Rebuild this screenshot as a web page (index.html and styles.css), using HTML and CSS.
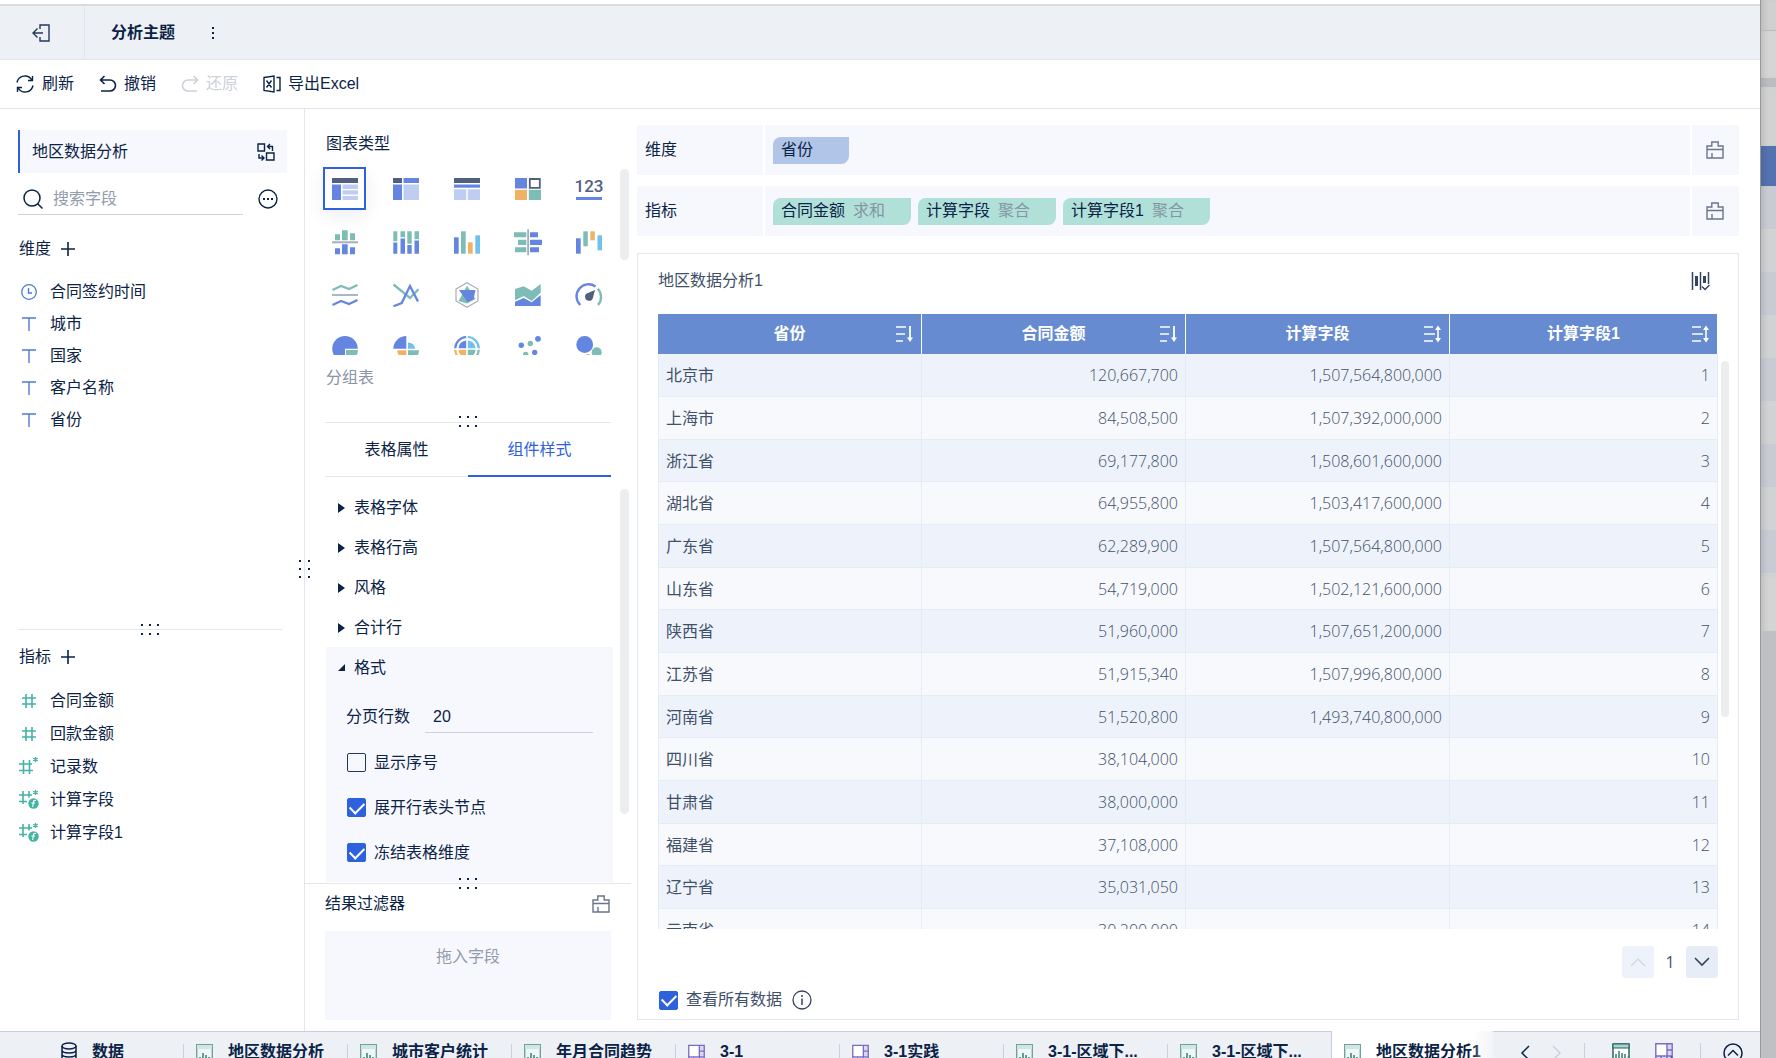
FILE: index.html
```html
<!DOCTYPE html>
<html lang="zh-CN">
<head>
    <meta charset="utf-8">
    <title>分析主题</title>
    <link rel="stylesheet" href="styles.css">
</head>
<body>
    <!-- shared icons -->
    <svg class="sprite" aria-hidden="true">
        <symbol id="i-text" viewBox="0 0 16 16"><path d="M1 2h14M8 2v13" fill="none" stroke="#4f7bd0" stroke-width="1.4"/></symbol>
        <symbol id="i-num" viewBox="0 0 20 20"><path d="M3 7h14M3 13h14M7 3v14M13 3v14" fill="none" stroke="#43b3a6" stroke-width="1.6"/></symbol>
        <symbol id="i-numstar" viewBox="0 0 20 20"><path d="M0 7h13M0 13.500h14M4.500 3v14M10.500 3v14" fill="none" stroke="#43b3a6" stroke-width="1.6"/><path d="M16.500 0v5M14.200 1.200l4.600 2.600M18.800 1.200l-4.600 2.600" stroke="#43b3a6" stroke-width="1.3"/></symbol>
        <symbol id="i-calc" viewBox="0 0 20 20"><path d="M0 5h13M0 11.500h8M4 1v13M10 1v6.500" fill="none" stroke="#43b3a6" stroke-width="1.6"/><path d="M16.500 0v5M14.200 1.200l4.600 2.600M18.800 1.200l-4.600 2.600" stroke="#43b3a6" stroke-width="1.3"/><circle cx="14.500" cy="13.500" r="5.200" fill="#43b3a6"/><path d="M17 10.500c-2-.6-2.500.6-2.700 2l-.6 4.500M12.400 13h3.800" fill="none" stroke="#fff" stroke-width="1.100"/></symbol>
        <symbol id="i-plus" viewBox="0 0 14 14"><path d="M7 0v14M0 7h14" stroke="#0b2346" stroke-width="1.600"/></symbol>
        <symbol id="i-clear" viewBox="0 0 18 18"><path d="M1 17V5h4.800V1h6.400v4H17v12zM1 8.500h16M6 17v-5" fill="none" stroke="#68758d" stroke-width="1.400"/></symbol>
        <symbol id="i-grip" viewBox="0 0 18 11"><path d="M0 0h2v2H0zM8 0h2v2H8zM16 0h2v2h-2zM0 9h2v2H0zM8 9h2v2H8zM16 9h2v2h-2z" fill="#0b2346"/></symbol>
        <symbol id="i-desc" viewBox="0 0 18 18"><path d="M1 2h10M1 9h9M1 16h7" stroke="#fff" stroke-width="1.600"/><path d="M15 1v13" stroke="#fff" stroke-width="1.800"/><path d="M12 12.500h6L15 17z" fill="#fff"/></symbol>
        <symbol id="i-both" viewBox="0 0 18 18"><path d="M1 2h9M1 9h11M1 16h9" stroke="#fff" stroke-width="1.600"/><path d="M15 3v12" stroke="#fff" stroke-width="1.600"/><path d="M12 5h6l-3-4.500zM12 13h6l-3 4.500z" fill="#fff"/></symbol>
        <symbol id="i-comp" viewBox="0 0 17 20"><path d="M.7.700h15.600v18.600H.7z" fill="#eef7f5" stroke="#6fa39c" stroke-width="1.400"/><path d="M1 1h15v4H1z" fill="#cfe6e2"/><path d="M4 19v-6M7 19V9M10 19v-8M13 19v-6" stroke="#3f857c" stroke-width="1.600"/></symbol>
        <symbol id="i-dash" viewBox="0 0 18 20"><path d="M1 1h16v18H1z" fill="#ddd6f4"/><path d="M1 1h11v12H1z" fill="#fff"/><path d="M.8.800h16.400v18.400H.8zM12 1v18M1 13h16M12 7h5M6 13v6" fill="none" stroke="#7a6cc4" stroke-width="1.400"/></symbol>
    </svg>

    <div class="page">
        <div class="app">
            <header class="topbar">
                <button class="back" aria-label="退出">
                    <svg width="18" height="18" viewBox="0 0 18 18"><path d="M8 5V1h9v16H8v-4M1 9h10M5.500 4.500L1 9l4.500 4.500" fill="none" stroke="#24395a" stroke-width="1.400"/></svg>
                </button>
                <h1>分析主题</h1>
                <button class="dots" aria-label="更多"><svg width="4" height="14" viewBox="0 0 4 14"><path d="M1 1h2v2H1zM1 6h2v2H1zM1 11h2v2H1z" fill="#0b2346"/></svg></button>
            </header>

            <nav class="toolbar">
                <button><svg width="20" height="18" viewBox="0 0 20 18"><path d="M2 7.500A8 8 0 0 1 16.800 5M18 10.500A8 8 0 0 1 3.200 13M17.500 1v4.500H13M2.500 17v-4.500H7" fill="none" stroke="#0b2346" stroke-width="1.400"/></svg>刷新</button>
                <button><svg width="18" height="18" viewBox="0 0 18 18"><path d="M5.500 1L1.500 5l4 4M1.500 5H11a5.500 5.500 0 0 1 0 11H2" fill="none" stroke="#0b2346" stroke-width="1.600"/></svg>撤销</button>
                <button disabled><svg width="18" height="18" viewBox="0 0 18 18"><path d="M12.500 1l4 4-4 4M16.500 5H7a5.500 5.500 0 0 0 0 11h9" fill="none" stroke="#cdd1da" stroke-width="1.600"/></svg>还原</button>
                <button><svg width="18" height="18" viewBox="0 0 18 18"><path d="M1 2.500L11 1v16L1 15.500zM13.500 2.500H17v13h-3.500M3.500 5.500l5 7M8.500 5.500l-5 7" fill="none" stroke="#0b2346" stroke-width="1.400"/></svg>导出Excel</button>
            </nav>

            <main class="main">
                <aside class="fields">
                    <section class="dims">
                        <div class="dataset">地区数据分析
                            <button aria-label="切换数据集"><svg width="18" height="18" viewBox="0 0 18 18"><path d="M1 1h6.500v7H1zM9.500 10H17v7H9.500zM11 3.500h4.500V8M13 1l-2.500 2.500L13 6M2 11v4h4.500M4.500 12.500L7 15l-2.500 2.500" fill="none" stroke="#0b2346" stroke-width="1.400"/></svg></button>
                        </div>
                        <div class="search">
                            <label><svg width="20" height="20" viewBox="0 0 20 20"><circle cx="9" cy="9" r="8" fill="none" stroke="#0b2346" stroke-width="1.500"/><path d="M14.500 14.500l5 5" stroke="#0b2346" stroke-width="1.500"/></svg>
                            <input type="text" placeholder="搜索字段" aria-label="搜索字段"></label>
                            <button aria-label="更多"><svg width="20" height="20" viewBox="0 0 20 20"><circle cx="10" cy="10" r="9" fill="none" stroke="#0b2346" stroke-width="1.400"/><path d="M5 9h2v2H5zM9 9h2v2H9zM13 9h2v2h-2z" fill="#0b2346"/></svg></button>
                        </div>
                        <h2>维度 <button aria-label="添加维度"><svg width="14" height="14"><use href="#i-plus"/></svg></button></h2>
                        <ul>
                            <li><svg width="16" height="16" viewBox="0 0 16 16"><path d="M7.500 4v5H11" fill="none" stroke="#4f7bd0" stroke-width="1.400"/><circle cx="8" cy="8" r="7.300" fill="none" stroke="#4f7bd0" stroke-width="1.300"/></svg>合同签约时间</li>
                            <li><svg width="16" height="16"><use href="#i-text"/></svg>城市</li>
                            <li><svg width="16" height="16"><use href="#i-text"/></svg>国家</li>
                            <li><svg width="16" height="16"><use href="#i-text"/></svg>客户名称</li>
                            <li><svg width="16" height="16"><use href="#i-text"/></svg>省份</li>
                        </ul>
                    </section>
                    <section class="measures">
                        <svg class="grip" width="18" height="11"><use href="#i-grip"/></svg>
                        <h2>指标 <button aria-label="添加指标"><svg width="14" height="14"><use href="#i-plus"/></svg></button></h2>
                        <ul>
                            <li><svg width="20" height="20"><use href="#i-num"/></svg>合同金额</li>
                            <li><svg width="20" height="20"><use href="#i-num"/></svg>回款金额</li>
                            <li><svg width="20" height="20"><use href="#i-numstar"/></svg>记录数</li>
                            <li><svg width="20" height="20"><use href="#i-calc"/></svg>计算字段</li>
                            <li><svg width="20" height="20"><use href="#i-calc"/></svg>计算字段1</li>
                        </ul>
                    </section>
                    <svg class="grip-side" width="11" height="18" viewBox="0 0 11 18"><path d="M0 0h2v2H0zM9 0h2v2H9zM0 8h2v2H0zM9 8h2v2H9zM0 16h2v2H0zM9 16h2v2H9z" fill="#0b2346"/></svg>
                </aside>

                <div class="config">
                    <section class="types">
                        <h2>图表类型</h2>
                        <div class="scroll">
                            <div class="chart-grid">
                                <button class="selected" aria-label="分组表"><svg viewBox="0 0 28 28"><path class="k" d="M1 3h26v5H1z"/><path class="b" d="M1 9.500h9V25H1z"/><path class="l" d="M11.500 9.500H27V14H11.500zM11.500 15.300H27V19.500H11.500zM11.500 21H27v4H11.500z"/></svg></button>
                                <button aria-label="交叉表"><svg viewBox="0 0 28 28"><path class="k" d="M1 3h9v5H1z"/><path class="b" d="M11.500 3H27v5H11.500zM1 9.500h9V25H1z"/><path class="l" d="M11.500 9.500H27V25H11.500z"/></svg></button>
                                <button aria-label="明细表"><svg viewBox="0 0 28 28"><path class="k" d="M1 3h26v5H1z"/><path class="b" d="M1 9.500h26v3.200H1z"/><path class="l" d="M1 14.200h12.200V25H1zM14.800 14.200H27V25H14.800z"/></svg></button>
                                <button aria-label="颜色表格"><svg viewBox="0 0 28 28"><path class="b" d="M1 3h12v10.500H1z"/><path d="M15.800 4h10v8.800h-10z" fill="#fff" stroke="#51607f" stroke-width="1.800"/><path class="o" d="M1 14.800h12V25H1z"/><path class="g" d="M14.800 14.800H27V25H14.800z"/></svg></button>
                                <button aria-label="指标卡"><svg viewBox="0 0 28 28"><text x="14" y="17" text-anchor="middle">123</text><path class="b" d="M1 22h26v3H1z"/></svg></button>

                                <button aria-label="对比柱状图"><svg viewBox="0 0 28 28"><path class="g" d="M4 6.300h5v6H4zM11 2.300h5.700v10H11zM19 5.300h5v7h-5z"/><path class="s" d="M1 13.300h26v2H1z"/><path class="b" d="M4 20.300h5v6H4zM11 16.300h5.700v10H11zM19 19.300h5v7h-5z"/></svg></button>
                                <button aria-label="堆积柱状图"><svg viewBox="0 0 28 28"><path class="g" d="M1.300 3.300h4v10h-4zM8.500 3.300H13v6H8.500zM15.300 3.300h4.400v12.400h-4.400zM22.500 3.300H27v8h-4.500z"/><path class="b" d="M1.300 14.500h4v11.200h-4zM8.500 10.500H13v15.200H8.500zM15.300 17h4.400v8.700h-4.400zM22.500 12.500H27v13.200h-4.500z"/></svg></button>
                                <button aria-label="柱状图"><svg viewBox="0 0 28 28"><path class="b" d="M1 9.300h4.700v16.400H1z"/><path class="g" d="M8 3.300h4.700v22.400H8z"/><path class="o" d="M15 14.300h4.700v11.400H15z"/><path class="c" d="M22.300 7.300H27v18.400h-4.700z"/></svg></button>
                                <button aria-label="对比条形图"><svg viewBox="0 0 28 28"><path class="g" d="M0 4.300h12.300v5H0zM4 11.700h8.300V17H4zM1 19.300h11.300v5H1z"/><path class="s" d="M13.200 1.300H15v26h-1.800z"/><path class="b" d="M16 4.300h8v5h-8zM16 11.700h12V17H16zM16 19.300h9v5h-9z"/></svg></button>
                                <button aria-label="瀑布图"><svg viewBox="0 0 28 28"><path class="b" d="M1 10.300h4.700v15.400H1z"/><path class="g" d="M8.300 3.300h4.500v15H8.300z"/><path class="o" d="M15.300 3.300h4.500v9h-4.500z"/><path class="c" d="M22.500 7.300H27v15h-4.500z"/></svg></button>

                                <button aria-label="范围面积图"><svg viewBox="0 0 28 28"><g fill="none" stroke-width="2.200"><path stroke="#7dbdb6" d="M1.500 9l8.500-4 8 3 8.500-4"/><path stroke="#a5adbe" stroke-width="1.800" d="M1 14h26"/><path stroke="#6486e0" d="M1.500 24l8.500-4 8 3 8.500-4"/></g></svg></button>
                                <button aria-label="折线图"><svg viewBox="0 0 28 28"><g fill="none" stroke-width="2.300"><path stroke="#7dbdb6" d="M1.500 3.500L18 17l8.500-8.700"/><path stroke="#6486e0" d="M1.500 25.300l8.200-3.300L18 5l8 15.500"/></g></svg></button>
                                <button aria-label="雷达图"><svg viewBox="0 0 28 28"><path d="M14 1.700L25 8v12l-11 6.300L3 20V8z" fill="none" stroke="#a5adbe" stroke-width="1.200"/><path class="g" d="M14 4.700L22.500 18 14 22.500 5.500 20z"/><path class="b" d="M6 9h16.500l-2 9.500-6 2.500z"/></svg></button>
                                <button aria-label="面积图"><svg viewBox="0 0 28 28"><path class="g" d="M1 8l8.700-2.700 8 4.400L26.700 3v8.700L17.700 20l-8-5L1 19.300z"/><path class="b" d="M1 20.700L9.700 17l8 4.300 9-7.300v11H1z"/></svg></button>
                                <button aria-label="仪表盘"><svg viewBox="0 0 28 28"><g fill="none" stroke-width="2.400"><path stroke="#6486e0" d="M5.300 24A12 12 0 0 1 20.500 5.500"/><path stroke="#7dbdb6" d="M22.800 7.800A12 12 0 0 1 23 24"/></g><path class="k" d="M20 9l-2 7.500a4 4 0 1 1-5-4.500z"/></svg></button>

                                <button aria-label="饼图"><svg viewBox="0 0 28 28"><path class="b" d="M14 27.500A12.800 12.800 0 1 1 26.800 14.700H14z"/><path class="g" d="M15 16h12a12 12 0 0 1-12 11.500z"/></svg></button>
                                <button aria-label="玫瑰图"><svg viewBox="0 0 28 28"><path class="b" d="M14.300 14.700V2a13 13 0 0 0-13 12.700z"/><path class="c" d="M16 14.700V8.500a7 7 0 0 1 7.300 6.200z"/><path class="o" d="M14.300 16.300v9a9 9 0 0 1-9-9z"/><path class="g" d="M16 16.300h11a11 11 0 0 1-11 11z"/></svg></button>
                                <button aria-label="多层饼图"><svg viewBox="0 0 28 28"><g fill="none" stroke-width="2.200"><path stroke="#6486e0" d="M2.300 14.300A11.500 11.500 0 0 1 13.200 3"/><path stroke="#70c2ed" d="M14.800 3a11.500 11.500 0 0 1 11 11.300"/><path stroke="#f0b364" d="M2.300 15.800A11.500 11.500 0 0 0 13.200 27"/><path stroke="#7dbdb6" d="M25.700 15.800A11.500 11.500 0 0 1 14.800 27"/></g><path class="b" d="M13.200 14.300V6.500a8 8 0 0 0-7.700 7.800z"/><path class="c" d="M14.800 14.300V6.500a8 8 0 0 1 7.700 7.800z"/><path class="o" d="M13.200 15.800v7.700a8 8 0 0 1-7.700-7.700z"/><path class="g" d="M14.800 15.800v7.700a8 8 0 0 0 7.700-7.700z"/></svg></button>
                                <button aria-label="散点图"><svg viewBox="0 0 28 28"><circle class="b" cx="7.300" cy="11.300" r="2.700"/><circle class="g" cx="16.300" cy="9.500" r="2.700"/><circle class="b" cx="24" cy="4.800" r="2.900"/><circle class="g" cx="11.700" cy="20.500" r="2.700"/><circle class="b" cx="20.700" cy="18.500" r="2.700"/></svg></button>
                                <button aria-label="气泡图"><svg viewBox="0 0 28 28"><circle class="b" cx="9.700" cy="10.500" r="8.400"/><circle class="g" cx="21.700" cy="18.300" r="5"/><circle class="o" cx="13" cy="23" r="3"/></svg></button>
                            </div>
                            <span class="bar bar-types"></span>
                        </div>
                        <p>分组表</p>
                    </section>

                    <section class="style">
                        <svg class="grip" width="18" height="11"><use href="#i-grip"/></svg>
                        <div class="tabs" role="tablist">
                            <button role="tab">表格属性</button>
                            <button role="tab" class="active">组件样式</button>
                        </div>
                        <div class="panels">
                            <button class="fold">表格字体</button>
                            <button class="fold">表格行高</button>
                            <button class="fold">风格</button>
                            <button class="fold">合计行</button>
                            <div class="open">
                                <button class="fold">格式</button>
                                <div class="page-rows"><label for="rows">分页行数</label><input type="text" id="rows" value="20"></div>
                                <label class="check"><input type="checkbox">显示序号</label>
                                <label class="check"><input type="checkbox" checked>展开行表头节点</label>
                                <label class="check"><input type="checkbox" checked>冻结表格维度</label>
                            </div>
                            <span class="bar bar-panels"></span>
                        </div>
                    </section>

                    <section class="filter">
                        <svg class="grip" width="18" height="11"><use href="#i-grip"/></svg>
                        <div class="filter-head"><h2>结果过滤器</h2><button aria-label="清空"><svg width="18" height="18"><use href="#i-clear"/></svg></button></div>
                        <div class="drop">拖入字段</div>
                    </section>
                </div>

                <div class="work">
                    <div class="shelf">
                        <span class="name">维度</span>
                        <div class="pills"><button class="pill dim">省份</button></div>
                        <button class="clear" aria-label="清空维度"><svg width="18" height="18"><use href="#i-clear"/></svg></button>
                    </div>
                    <div class="shelf">
                        <span class="name">指标</span>
                        <div class="pills">
                            <button class="pill">合同金额<small>求和</small></button>
                            <button class="pill">计算字段<small>聚合</small></button>
                            <button class="pill">计算字段1<small>聚合</small></button>
                        </div>
                        <button class="clear" aria-label="清空指标"><svg width="18" height="18"><use href="#i-clear"/></svg></button>
                    </div>

                    <section class="card">
                        <div class="card-head">
                            <h2>地区数据分析1</h2>
                            <button aria-label="筛选列"><svg width="19" height="19" viewBox="0 0 19 19"><path d="M1.500 0v18M9.500 0v18M17.500 0v12" stroke="#34445f" stroke-width="1.500"/><path d="M5.500 4v10M13.500 4v7" stroke="#34445f" stroke-width="3"/><path d="M11 14.500l3 3 4.500-4.500" fill="none" stroke="#34445f" stroke-width="1.500"/></svg></button>
                        </div>
                        <div class="table-area">
                            <div class="table-clip">
                                <table>
                                    <colgroup><col class="col-num"><col class="col-num"><col class="col-num"><col></colgroup>
                                    <thead>
                                        <tr>
                                            <th><div><span>省份</span><button aria-label="排序"><svg width="18" height="18"><use href="#i-desc"/></svg></button></div></th>
                                            <th><div><span>合同金额</span><button aria-label="排序"><svg width="18" height="18"><use href="#i-desc"/></svg></button></div></th>
                                            <th><div><span>计算字段</span><button aria-label="排序"><svg width="18" height="18"><use href="#i-both"/></svg></button></div></th>
                                            <th><div><span>计算字段1</span><button aria-label="排序"><svg width="18" height="18"><use href="#i-both"/></svg></button></div></th>
                                        </tr>
                                    </thead>
                                    <tbody>
                                        <tr><td>北京市</td><td>120,667,700</td><td>1,507,564,800,000</td><td>1</td></tr>
                                        <tr><td>上海市</td><td>84,508,500</td><td>1,507,392,000,000</td><td>2</td></tr>
                                        <tr><td>浙江省</td><td>69,177,800</td><td>1,508,601,600,000</td><td>3</td></tr>
                                        <tr><td>湖北省</td><td>64,955,800</td><td>1,503,417,600,000</td><td>4</td></tr>
                                        <tr><td>广东省</td><td>62,289,900</td><td>1,507,564,800,000</td><td>5</td></tr>
                                        <tr><td>山东省</td><td>54,719,000</td><td>1,502,121,600,000</td><td>6</td></tr>
                                        <tr><td>陕西省</td><td>51,960,000</td><td>1,507,651,200,000</td><td>7</td></tr>
                                        <tr><td>江苏省</td><td>51,915,340</td><td>1,507,996,800,000</td><td>8</td></tr>
                                        <tr><td>河南省</td><td>51,520,800</td><td>1,493,740,800,000</td><td>9</td></tr>
                                        <tr><td>四川省</td><td>38,104,000</td><td></td><td>10</td></tr>
                                        <tr><td>甘肃省</td><td>38,000,000</td><td></td><td>11</td></tr>
                                        <tr><td>福建省</td><td>37,108,000</td><td></td><td>12</td></tr>
                                        <tr><td>辽宁省</td><td>35,031,050</td><td></td><td>13</td></tr>
                                        <tr><td>云南省</td><td>30,200,000</td><td></td><td>14</td></tr>
                                    </tbody>
                                </table>
                            </div>
                            <span class="bar bar-table"></span>
                        </div>
                        <div class="pager">
                            <button disabled aria-label="上一页"><svg width="16" height="10" viewBox="0 0 16 10"><path d="M1 9l7-7 7 7" fill="none" stroke="#d3d8e2" stroke-width="1.500"/></svg></button>
                            <span>1</span>
                            <button aria-label="下一页"><svg width="16" height="10" viewBox="0 0 16 10"><path d="M1 1l7 7 7-7" fill="none" stroke="#34445f" stroke-width="1.600"/></svg></button>
                        </div>
                        <div class="all-data">
                            <label class="check"><input type="checkbox" checked>查看所有数据</label>
                            <svg width="20" height="20" viewBox="0 0 20 20"><circle cx="10" cy="10" r="9" fill="none" stroke="#34445f" stroke-width="1.300"/><path d="M10 8.500V15M10 5v2" stroke="#34445f" stroke-width="1.500"/></svg>
                        </div>
                    </section>
                </div>
            </main>

            <footer class="sheets">
                <a href="#" class="source"><svg width="16" height="20" viewBox="0 0 16 20"><path d="M1 4v12c0 4 14 4 14 0V4M1 8c0 4 14 4 14 0M1 12c0 4 14 4 14 0" fill="none" stroke="#0b2346" stroke-width="1.500"/><ellipse cx="8" cy="4" rx="7" ry="3" fill="none" stroke="#0b2346" stroke-width="1.500"/></svg>数据</a>
                <a href="#"><svg width="17" height="20"><use href="#i-comp"/></svg>地区数据分析</a>
                <a href="#"><svg width="17" height="20"><use href="#i-comp"/></svg>城市客户统计</a>
                <a href="#"><svg width="17" height="20"><use href="#i-comp"/></svg>年月合同趋势</a>
                <a href="#"><svg width="17" height="20"><use href="#i-dash"/></svg>3-1</a>
                <a href="#"><svg width="17" height="20"><use href="#i-dash"/></svg>3-1实践</a>
                <a href="#"><svg width="17" height="20"><use href="#i-comp"/></svg>3-1-区域下...</a>
                <a href="#"><svg width="17" height="20"><use href="#i-comp"/></svg>3-1-区域下...</a>
                <a href="#" class="current"><svg width="17" height="20"><use href="#i-comp"/></svg>地区数据分析1</a>
                <div class="sheet-tools">
                    <button aria-label="向左"><svg width="10" height="16" viewBox="0 0 10 16"><path d="M9 1L2 8l7 7" fill="none" stroke="#0b2346" stroke-width="1.500"/></svg></button>
                    <button disabled aria-label="向右"><svg width="10" height="16" viewBox="0 0 10 16"><path d="M1 1l7 7-7 7" fill="none" stroke="#cdd1da" stroke-width="1.500"/></svg></button>
                    <div class="add">
                        <button aria-label="添加组件"><svg width="20" height="20" viewBox="0 0 20 20"><path d="M1 1h16v18H1z" fill="#fff" stroke="#28655e" stroke-width="1.500"/><path d="M1 1h16v4H1z" fill="#a9d4ce" stroke="#28655e"/><path d="M4 16v-5M7 16V8M10 16v-6M13 16v-5M13 16h7M16.500 13v7" stroke="#3f857c" stroke-width="1.600"/></svg></button>
                        <button aria-label="添加仪表板"><svg width="20" height="20" viewBox="0 0 20 20"><use href="#i-dash" width="18" height="20"/><path d="M13 16h7M16.500 13v7" stroke="#5a4bb0" stroke-width="1.600"/></svg></button>
                    </div>
                    <button aria-label="展开"><svg width="20" height="20" viewBox="0 0 20 20"><circle cx="10" cy="10" r="9" fill="none" stroke="#0b2346" stroke-width="1.500"/><path d="M5 12.500l5-5 5 5" fill="none" stroke="#0b2346" stroke-width="1.500"/></svg></button>
                </div>
            </footer>
        </div>

        <!-- page lying behind the editor window -->
        <div class="behind" aria-hidden="true">
            <div class="bh-top"></div>
            <div class="bh-nav"></div>
            <div class="bh-gap"></div>
            <div class="bh-title"></div>
            <div class="bh-head"></div>
            <div class="bh-rows"></div>
            <div class="bh-foot"></div>
        </div>
    </div>
</body>
</html>
```
FILE: styles.css
```css
* {
    box-sizing: border-box;
}

body {
    margin: 0;
    height: 100vh;
    overflow: hidden;
    font-family: "Liberation Sans", "Noto Sans CJK SC", sans-serif;
    font-size: 16px;
    line-height: 24px;
    color: #0b2346;
    background: #fff;
}

h1, h2, p, ul {
    margin: 0;
    padding: 0;
    font-size: 16px;
    font-weight: 400;
    list-style: none;
}

button, input {
    font: inherit;
    color: inherit;
    border: 0;
    padding: 0;
    margin: 0;
    background: none;
}

button {
    display: flex;
    align-items: center;
}

svg {
    display: block;
    flex: none;
}

.sprite {
    position: absolute;
    width: 0;
    height: 0;
}

.page {
    display: flex;
    height: 100vh;
}

.app {
    flex: 1;
    min-width: 0;
    display: flex;
    flex-direction: column;
    padding-top: 4px;
}

/* top bars */
.topbar {
    display: flex;
    align-items: center;
    height: 56px;
    background: #edf0f5;
    border-top: 2px solid #dadbdd;
    border-bottom: 1px solid #e1e5ef;
}

.back {
    width: 85px;
    height: 100%;
    padding-left: 32px;
    border-right: 1px solid #e1e5ef;
}

.topbar h1 {
    font-weight: 700;
    margin: 0 36px 0 26px;
}

.toolbar {
    display: flex;
    gap: 25px;
    height: 49px;
    padding: 0 0 1px 15px;
    border-bottom: 1px solid #e1e5ef;
}

.toolbar button {
    gap: 7px;
}

.toolbar button:disabled {
    color: #cdd1da;
}

.main {
    flex: 1;
    min-height: 0;
    display: flex;
}

/* field list */
.fields {
    position: relative;
    display: flex;
    flex-direction: column;
    width: 305px;
    border-right: 1px solid #e4e6ef;
}

.dims {
    flex: 520 1 0;
    padding: 21px 17px 0 18px;
}

.dataset {
    display: flex;
    align-items: center;
    justify-content: space-between;
    height: 43px;
    padding: 0 12px;
    background: #f7f8fd;
    border-left: 2px solid #2d62dc;
}

.search {
    display: flex;
    align-items: center;
    justify-content: space-between;
    padding: 10px 9px 0 0;
}

.search label {
    display: flex;
    align-items: center;
    gap: 10px;
    width: 225px;
    height: 32px;
    padding-left: 5px;
    border-bottom: 1px solid #cfd3dc;
}

.search input {
    width: 100%;
    outline: 0;
}

.search input::placeholder {
    color: #929bad;
}

.fields h2 {
    display: flex;
    align-items: center;
    gap: 10px;
    padding-left: 1px;
}

.dims h2 {
    margin: 22px 0 15px;
}

.dims li {
    display: flex;
    align-items: center;
    gap: 13px;
    height: 32px;
    padding-left: 3px;
}

.measures {
    position: relative;
    flex: 402 1 0;
    margin: 0 22px 0 18px;
    padding-top: 15px;
    border-top: 1px solid #e4e6e9;
}

.measures h2 {
    margin-bottom: 15px;
}

.measures li {
    display: flex;
    align-items: center;
    gap: 11px;
    height: 33px;
    padding-left: 1px;
}

.grip {
    position: absolute;
    top: -6px;
    left: 50%;
    margin-left: -9px;
}

.grip-side {
    position: absolute;
    top: 50%;
    right: -6px;
    margin-top: -10px;
}

/* chart type and style */
.config {
    display: flex;
    flex-direction: column;
    width: 326px;
}

.types {
    height: 313px;
    padding: 23px 0 0 18px;
}

.types h2 {
    padding-left: 3px;
}

.scroll {
    display: flex;
    justify-content: space-between;
    margin-top: 11px;
    padding-right: 2px;
}

.chart-grid {
    display: grid;
    grid-template-columns: repeat(5, 43px);
    grid-auto-rows: 43px;
    gap: 10px 18px;
    height: 188px;
    clip-path: inset(0 -20px 0 -20px);
}

.chart-grid button {
    justify-content: center;
}

.chart-grid .selected {
    border: 2px solid #2d62dc;
    box-shadow: 0 6px 18px rgba(20, 40, 80, .08);
}

.chart-grid svg {
    width: 28px;
    height: 28px;
    overflow: visible;
}

.chart-grid text {
    font-family: Roboto, sans-serif;
    font-size: 17px;
    font-weight: 500;
    fill: #51607f;
}

.k { fill: #51607f; }
.b { fill: #6486e0; }
.l { fill: #bfcdf3; }
.o { fill: #f0b364; }
.g { fill: #7dbdb6; }
.c { fill: #70c2ed; }
.s { fill: #a5adbe; }

.types p {
    padding: 11px 0 0 3px;
    color: #8b93a5;
}

.bar {
    display: block;
    width: 9px;
    border-radius: 5px;
    background: #ecedef;
}

.bar-types {
    height: 91px;
    margin-top: 2px;
}

.style {
    position: relative;
    flex: 1;
    min-height: 0;
    display: flex;
    flex-direction: column;
}

.tabs {
    display: flex;
    margin: 0 20px;
    border-top: 1px solid #e4e6ef;
    border-bottom: 1px solid #e4e6ef;
}

.tabs button {
    flex: 1;
    justify-content: center;
    height: 54px;
    padding-top: 2px;
    margin-bottom: -1px;
    border-bottom: 2px solid transparent;
}

.tabs .active {
    color: #2d62dc;
    border-color: #2d62dc;
}

.panels {
    position: relative;
    flex: 1;
    min-height: 0;
    padding: 10px 18px 0 21px;
    margin-bottom: 1px;
    overflow: hidden;
}

.fold {
    gap: 9px;
    width: 100%;
    height: 40px;
    padding: 1px 0 0 12px;
}

.fold::before {
    content: "";
    border: 5px solid transparent;
    border-left: 7px solid #0b2346;
    border-right: 0;
}

.open {
    height: 300px;
    background: #f7f8fd;
}

.open .fold::before {
    border: 0;
    border-top: 7px solid transparent;
    border-right: 7px solid #0b2346;
}

.page-rows {
    display: flex;
    align-items: center;
    gap: 15px;
    height: 46px;
    margin: 7px 20px 0 20px;
}

.page-rows input {
    flex: 1;
    min-width: 0;
    height: 32px;
    padding-left: 8px;
    border-bottom: 1px solid #cdd1da;
}

.check {
    display: flex;
    align-items: center;
    gap: 8px;
}

.open .check {
    height: 45px;
    padding-left: 21px;
}

.check input {
    appearance: none;
    display: grid;
    place-items: center;
    width: 19px;
    height: 19px;
    border: 1px solid #24395a;
    border-radius: 2px;
}

.check input:checked {
    background: #2d62dc;
    border-color: #2d62dc;
}

.check input:checked::before {
    content: "";
    width: 12px;
    height: 7px;
    margin-bottom: 3px;
    border: solid #fff;
    border-width: 0 0 2px 2px;
    transform: rotate(-45deg);
}

.bar-panels {
    position: absolute;
    top: 12px;
    right: 2px;
    height: 325px;
}

.filter {
    position: relative;
    display: flex;
    flex-direction: column;
    height: 148px;
    padding: 8px 20px 11px;
    border-top: 1px solid #e4e6e9;
}

.filter-head {
    display: flex;
    justify-content: space-between;
    padding-right: 1px;
    margin-bottom: 15px;
}

.drop {
    flex: 1;
    padding-top: 14px;
    text-align: center;
    color: #929bad;
    background: #f7f8fd;
}

/* work area */
.work {
    flex: 1;
    min-width: 0;
    display: flex;
    flex-direction: column;
    gap: 11px;
    padding: 16px 21px 11px 6px;
}

.shelf {
    display: flex;
    height: 50px;
    background: #f7f8fd;
}

.shelf .name {
    width: 128px;
    padding: 13px 8px;
    border-right: 2px solid #fff;
}

.pills {
    flex: 1;
    display: flex;
    align-items: center;
    gap: 7px;
    padding-left: 8px;
}

.pill {
    gap: 8px;
    height: 27px;
    padding: 0 26px 0 8px;
    border-radius: 8px 0;
    background: #b1e0d9;
}

.pill.dim {
    padding-right: 36px;
    background: #b0c5e8;
}

.pill small {
    font-size: 16px;
    color: #8496a3;
}

.clear {
    justify-content: center;
    width: 49px;
    padding-right: 2px;
    border-left: 2px solid #fff;
}

.card {
    flex: 1;
    min-height: 0;
    display: flex;
    flex-direction: column;
    margin-top: 6px;
    padding: 15px 20px 7px;
    border: 1px solid #e4e6ef;
    color: #41506a;
}

.card-head {
    display: flex;
    justify-content: space-between;
    margin-bottom: 21px;
    padding-right: 8px;
}

.table-area {
    flex: 1;
    min-height: 0;
    display: flex;
    gap: 3px;
    margin-right: -11px;
}

.table-clip {
    flex: 1;
    min-width: 0;
    overflow: hidden;
}

table {
    width: 100%;
    table-layout: fixed;
    border-collapse: separate;
    border-spacing: 0;
}

.col-num {
    width: 264px;
}

th {
    height: 40px;
    padding: 0 8px;
    color: #fff;
    font-weight: 700;
    background: #668bd1;
    border-right: 1px solid #fff;
}

th div {
    display: grid;
    grid-template-columns: 1fr auto 1fr;
    align-items: center;
}

th span {
    grid-column: 2;
}

th button {
    justify-self: end;
}

td {
    height: 43px;
    padding: 0 7px;
    text-align: right;
    font-family: "Open Sans", "Noto Sans CJK SC", sans-serif;
    font-weight: 300;
    background: #f7f9fd;
    border-right: 1px solid #e5ecf7;
    border-bottom: 1px solid #e5ecf7;
}

tr:nth-child(3n) td {
    height: 42px;
}

tr:nth-child(odd) td {
    background: #eef3fb;
}

td:first-child {
    text-align: left;
    font-weight: 400;
    border-left: 1px solid #e5ecf7;
}

.bar-table {
    margin-top: 47px;
    width: 8px;
    height: 356px;
}

.pager {
    display: flex;
    align-items: center;
    justify-content: flex-end;
    margin: 17px 0 10px;
    font-family: "Open Sans", sans-serif;
}

.pager button {
    justify-content: center;
    width: 32px;
    height: 32px;
    border-radius: 3px;
    background: #e6edf7;
}

.pager button:disabled {
    background: #eef2fa;
}

.pager span {
    width: 32px;
    text-align: center;
}

.all-data {
    display: flex;
    align-items: center;
    gap: 10px;
    padding-left: 1px;
}

/* sheet tabs, cut off by the window's lower edge */
.sheets {
    display: flex;
    height: 27px;
    overflow: hidden;
    background: #edf0f5;
}

.sheets a {
    display: flex;
    align-items: flex-start;
    gap: 15px;
    width: 164px;
    height: 42px;
    padding: 8px 0 0 13px;
    overflow: hidden;
    font-weight: 700;
    line-height: 24px;
    white-space: nowrap;
    text-decoration: none;
    color: inherit;
    border-top: 1px solid #cacde0;
    background: linear-gradient(#cbd0dc, #cbd0dc) no-repeat 0 12px / 1px 30px;
}

.sheets a svg {
    margin-top: 4px;
}

.sheets .source {
    width: 183px;
    padding-left: 61px;
    background: none;
}

.sheets .source svg {
    margin-top: 2px;
}

.sheets .current {
    position: relative;
    width: 162px;
    background: #fff;
    border-top: 0;
    border-left: 1px solid #cacde0;
    padding: 9px 0 0 12px;
}

.sheets .current::after {
    content: "";
    position: absolute;
    top: 0;
    right: 0;
    width: 20px;
    height: 42px;
    background: linear-gradient(90deg, rgba(255, 255, 255, 0), #f2f4f8);
}

.sheet-tools {
    flex: 1;
    display: flex;
    align-items: center;
    justify-content: space-between;
    height: 42px;
    padding: 0 17px 0 27px;
    border-top: 1px solid #cacde0;
}

.add {
    display: flex;
    gap: 23px;
    padding: 0 25px 0 27px;
    border-left: 1px solid #cbd0dc;
    border-right: 1px solid #cbd0dc;
}

/* dimmed page behind */
.behind {
    display: flex;
    flex-direction: column;
    width: 16px;
    border-left: 1px solid #97989b;
    background: #bfc0c3;
}

.behind div {
    box-shadow: inset 6px 0 6px -4px rgba(0, 0, 0, .12);
}

.bh-top {
    height: 31px;
    background: #d0d0d0;
    border-bottom: 1px solid #bcbcbe;
}

.bh-nav {
    height: 47px;
    background: #d5d5d5;
}

.bh-gap {
    height: 9px;
    background: #bcbdc0;
}

.bh-title {
    height: 59px;
    background: #d2d2d2;
}

.bh-head {
    height: 40px;
    background: #5472b0;
}

.bh-rows {
    height: 390px;
    background: repeating-linear-gradient(#c8cbd3 0 43px, #d1d2d4 43px 86px);
}

.bh-foot {
    height: 55px;
    background: #d4d4d4;
}
```
